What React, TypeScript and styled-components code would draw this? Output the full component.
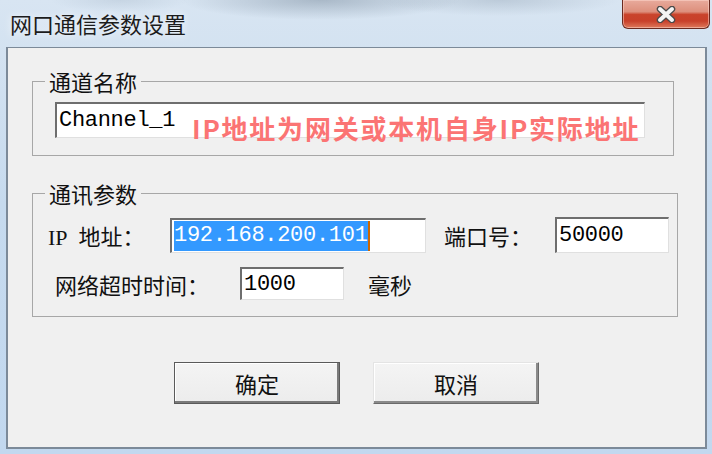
import React from "react";
import styled, { createGlobalStyle, css } from "styled-components";

const CloseGlyph: React.FC = () => (
  <svg width="22" height="17" viewBox="0 0 22 17">
    <path d="M5 3 L17 14 M17 3 L5 14" stroke="#4a4a4a" strokeWidth="6.5" strokeLinecap="round" />
    <path d="M5 3 L17 14 M17 3 L5 14" stroke="#f4f4f4" strokeWidth="4" strokeLinecap="round" />
  </svg>
);

const App: React.FC = () => {
  return (
    <>
      <GlobalStyle />
      <StWindow>
        <StTitleBar>
          <StTitle>网口通信参数设置</StTitle>
          <StCloseButton aria-label="关闭">
            <CloseGlyph />
          </StCloseButton>
        </StTitleBar>

        <StClient>
          <StGroup $width={642}>
            <StLegend>通道名称</StLegend>
            <StChannelBody>
              <StTextBox $width={590} $height={36}>
                Channel_1
                <StRedHint>IP地址为网关或本机自身IP实际地址</StRedHint>
              </StTextBox>
            </StChannelBody>
          </StGroup>

          <StGroup $width={646} $gapTop={24}>
            <StLegend>通讯参数</StLegend>
            <StParamBody>
              <StRow>
                <StLabel $width={122}>IP&nbsp; 地址：</StLabel>
                <StTextBox $width={256} $height={35}>
                  <StSelected>192.168.200.101</StSelected>
                  <StCaret />
                </StTextBox>
                <StLabel $width={111} $gapLeft={18}>端口号：</StLabel>
                <StTextBox $width={114} $height={36}>50000</StTextBox>
              </StRow>
              <StRow $indent={7}>
                <StLabel $width={185}>网络超时时间：</StLabel>
                <StTextBox $width={104} $height={33}>1000</StTextBox>
                <StLabel $gapLeft={24}>毫秒</StLabel>
              </StRow>
            </StParamBody>
          </StGroup>

          <StButtonRow>
            <StButton $primary>确定</StButton>
            <StButton>取消</StButton>
          </StButtonRow>
        </StClient>
      </StWindow>
    </>
  );
};

export default App;

const GlobalStyle = createGlobalStyle`
  html, body {
    margin: 0;
    padding: 0;
  }
  body {
    width: 712px;
    height: 454px;
    overflow: hidden;
    background: #c6dbf1;
    font-family: "Noto Sans CJK SC", sans-serif;
  }
`;

const StWindow = styled.div`
  width: 712px;
  height: 454px;
  box-sizing: border-box;
  display: flex;
  flex-direction: column;
  padding: 0 5px 5px 6px;
  background:
    radial-gradient(ellipse 140px 20px at 320px 0px, rgba(70, 90, 110, 0.32), rgba(70, 90, 110, 0) 100%),
    radial-gradient(ellipse 120px 16px at 500px 0px, rgba(90, 110, 130, 0.22), rgba(90, 110, 130, 0) 100%),
    radial-gradient(ellipse 70px 12px at 120px 0px, rgba(120, 140, 160, 0.18), rgba(120, 140, 160, 0) 100%),
    linear-gradient(180deg, #d8e5f2 0%, #c6daee 45%, #c2d8ef 100%);
`;

const StTitleBar = styled.div`
  height: 47px;
  flex-shrink: 0;
  display: flex;
  justify-content: space-between;
  align-items: flex-start;
  margin-right: -3px;
`;

const StTitle = styled.div`
  padding-left: 4px;
  font-size: 22px;
  line-height: 47px;
  color: #1c1c1c;
  text-shadow: 0 0 8px rgba(255, 255, 255, 0.9);
`;

const StCloseButton = styled.button`
  width: 88px;
  height: 29px;
  box-sizing: border-box;
  padding: 0;
  display: flex;
  align-items: center;
  justify-content: center;
  border: 1px solid #6a2a20;
  border-top: none;
  border-radius: 0 0 6px 6px;
  background: linear-gradient(
    180deg,
    #e8aa9c 0%,
    #dd8f7c 42%,
    #c9432b 52%,
    #c8402a 75%,
    #de7a5c 100%
  );
  box-shadow: inset 0 0 0 1px rgba(255, 220, 210, 0.5);
`;

const StClient = styled.div`
  flex: 1;
  display: flex;
  flex-direction: column;
  padding-top: 20px;
  background: #f0f0f0;
  border: 2px solid #7c8a99;
  border-top: 1px solid #7c8a99;
`;

const StGroup = styled.fieldset<{ $width: number; $gapTop?: number }>`
  width: ${(p) => p.$width}px;
  box-sizing: border-box;
  min-width: 0;
  margin: ${(p) => p.$gapTop ?? 0}px 0 0 24px;
  padding: 0;
  border: 1px solid #a7a7a7;
`;

const StLegend = styled.legend`
  margin-left: 12px;
  padding: 0 4px;
  font-size: 22px;
  line-height: 26px;
  color: #111;
`;

const StChannelBody = styled.div`
  padding: 8px 0 17px 22px;
`;

const StParamBody = styled.div`
  display: flex;
  flex-direction: column;
  gap: 14px;
  padding: 11px 0 16px 15px;
`;

const StRow = styled.div<{ $indent?: number }>`
  display: flex;
  align-items: center;
  padding-left: ${(p) => p.$indent ?? 0}px;
`;

const StLabel = styled.span<{ $width?: number; $gapLeft?: number }>`
  flex-shrink: 0;
  width: ${(p) => (p.$width ? `${p.$width}px` : "auto")};
  margin-left: ${(p) => p.$gapLeft ?? 0}px;
  font-family: "Liberation Serif", "Noto Sans CJK SC", serif;
  font-size: 22px;
  color: #111;
  white-space: nowrap;
`;

const StTextBox = styled.div<{ $width: number; $height: number }>`
  position: relative;
  width: ${(p) => p.$width}px;
  height: ${(p) => p.$height}px;
  box-sizing: border-box;
  flex-shrink: 0;
  display: flex;
  align-items: center;
  padding-left: 2px;
  background: #fff;
  border-top: 2px solid #6e6e6e;
  border-left: 2px solid #6e6e6e;
  border-right: 1px solid #e0e0e0;
  border-bottom: 1px solid #e0e0e0;
  font-family: "Liberation Mono", monospace;
  font-size: 22px;
  letter-spacing: -0.3px;
  color: #000;
  white-space: nowrap;
`;

const StSelected = styled.span`
  line-height: 30px;
  background: #3399ff;
  color: #fff;
`;

const StCaret = styled.span`
  width: 2px;
  height: 30px;
  background: #cc6600;
`;

const StRedHint = styled.span`
  position: absolute;
  left: 135px;
  top: 11px;
  font-family: "Noto Sans CJK SC", sans-serif;
  font-weight: 700;
  font-size: 26px;
  line-height: 1;
  letter-spacing: 1.8px;
  color: #fb7474;
`;

const StButtonRow = styled.div`
  display: flex;
  justify-content: center;
  gap: 33px;
  margin-top: 45px;
`;

const StButton = styled.button<{ $primary?: boolean }>`
  width: 166px;
  height: 42px;
  box-sizing: border-box;
  padding: 0;
  font-family: "Noto Sans CJK SC", sans-serif;
  font-size: 22px;
  color: #111;
  background: linear-gradient(180deg, #f4f4f4, #ececec);
  border: 1px solid;
  border-color: #e4e4e4 #6a6a6a #6a6a6a #e4e4e4;
  box-shadow: inset -2px -2px 0 #8a8a8a, inset 1px 1px 0 #fff;

  ${(p) =>
    p.$primary &&
    css`
      border-color: #5a5a5a;
      box-shadow: inset -2px -2px 0 #7a7a7a, inset 1px 1px 0 #fff;
    `}
`;
